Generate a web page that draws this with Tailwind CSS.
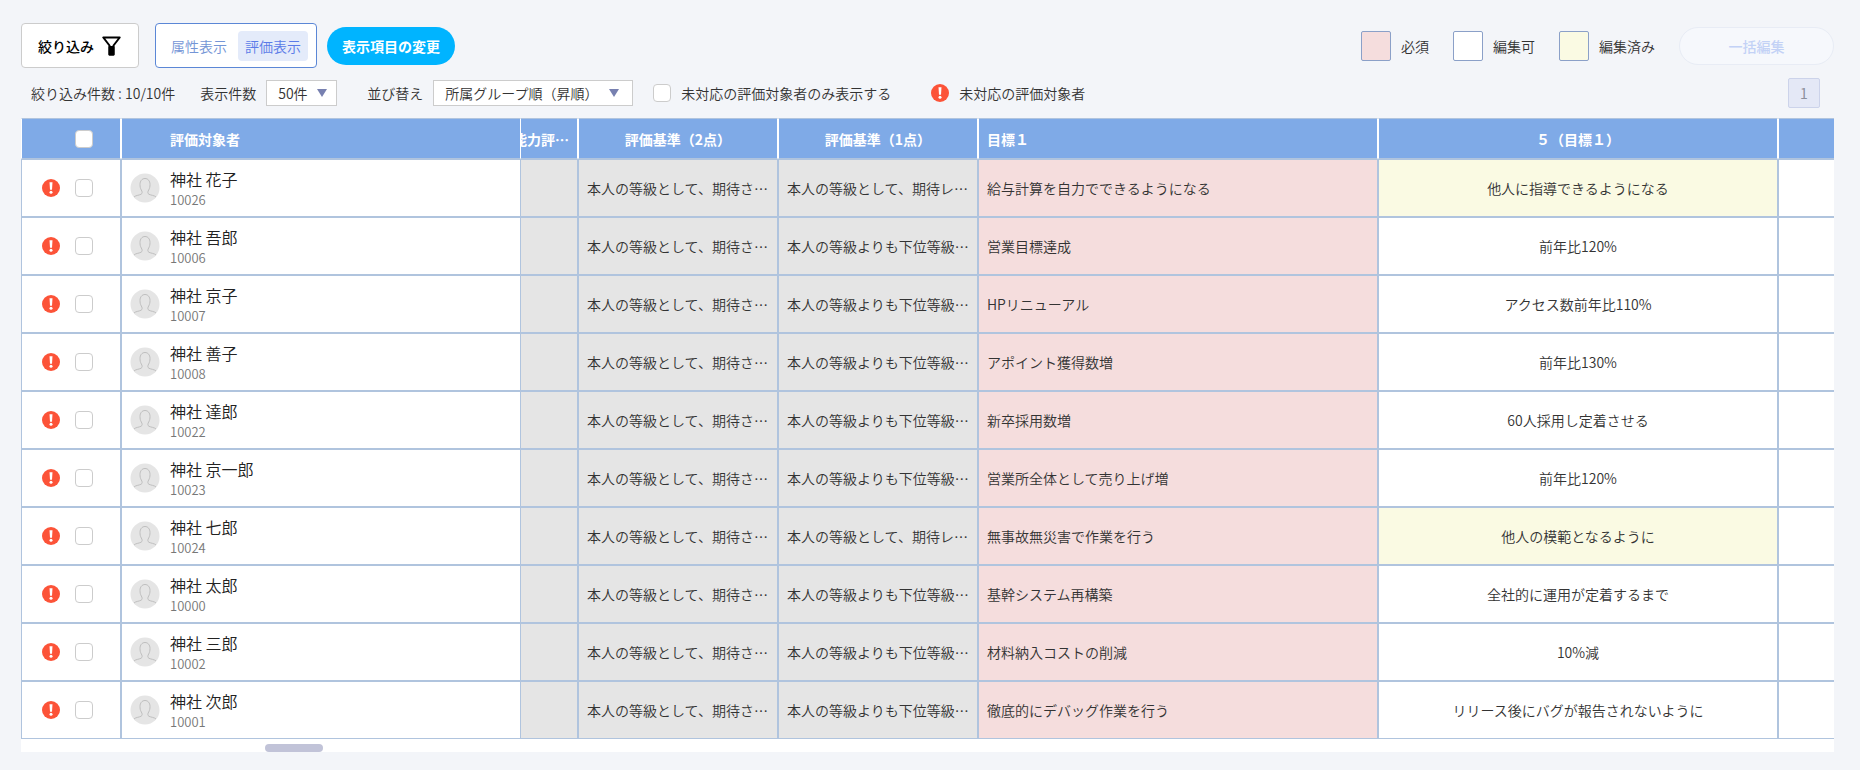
<!DOCTYPE html>
<html lang="ja">
  <head>
    <meta charset="UTF-8" />
    <meta name="viewport" content="width=device-width, initial-scale=1.0" />
    <script src="https://cdn.jsdelivr.net/npm/@tailwindcss/browser@4"></script>
    <title>評価対象者一覧</title>
  </head>
  <body class="min-h-screen bg-[#f3f5f9] font-['Noto_Sans_CJK_JP',sans-serif] text-sm font-[350] text-[#333]">
    <svg class="hidden" aria-hidden="true">
      <symbol id="alert" viewBox="0 0 18 18">
        <circle cx="9" cy="9" r="9" fill="#fc5338" />
        <path d="M7.500 3.300h3l-.5 7.400H8z" fill="#fff" />
        <circle cx="9" cy="13.300" r="1.500" fill="#fff" />
      </symbol>
      <symbol id="avatar" viewBox="0 0 30 30">
        <circle cx="15" cy="15" r="14.500" fill="#e5e5e5" />
        <path d="M4 24c1.500-1.600 5-1.700 7-2.700 1.800-.9 1.200-2.800.3-4.300-1-1.700-1.300-3.500-1.300-5.500C10 8 12 5.500 15 5.500s5 2.500 5 6c0 2-.3 3.800-1.300 5.500-.9 1.500-1.500 3.400.3 4.300 2 1 5.500 1.100 7 2.700" fill="none" stroke="#bfbfbf" />
      </symbol>
    </svg>

    <div class="px-[21px] pt-[23px] pr-[26px]">
      <!-- 上段 -->
      <div class="flex items-center">
        <button class="flex h-[45px] items-center gap-2 rounded border border-[#ccc] bg-white px-4 font-medium text-black">
          絞り込み
          <svg class="size-5" viewBox="0 0 20 20" fill="none" stroke="#000" stroke-width="2"><path d="M1.300 1.500h16.400L11.500 9.500V18.500H7.500V9.500z" stroke-linejoin="round" /><path d="M7.500 11h4v7.500h-4z" fill="#000" stroke-linejoin="round" /></svg>
        </button>
        <div class="ml-4 flex h-[45px] items-center gap-1 rounded border border-[#5b87d6] bg-white px-2">
          <button class="h-[30px] rounded px-[7px] text-[#7495d6]">属性表示</button>
          <button class="h-[30px] rounded bg-[#e4ebfa] px-[7px] text-[#5b7be8]">評価表示</button>
        </div>
        <button class="ml-[10px] h-[38px] rounded-full bg-[#00b4ff] px-[15px] font-bold text-white">表示項目の変更</button>

        <div class="ml-auto flex items-center gap-6">
          <div class="flex items-center gap-[10px]"><span class="size-[30px] rounded-xs border border-[#8ba0c8] bg-[#f5dddd]"></span>必須</div>
          <div class="flex items-center gap-[10px]"><span class="size-[30px] rounded-xs border border-[#8ba0c8] bg-white"></span>編集可</div>
          <div class="flex items-center gap-[10px]"><span class="size-[30px] rounded-xs border border-[#8ba0c8] bg-[#fafae3]"></span>編集済み</div>
          <button class="h-[38px] w-[155px] rounded-full border border-[#e8ecf5] bg-[#f6f8fc] font-medium text-[#c3d2f6]" disabled>一括編集</button>
        </div>
      </div>

      <!-- 下段 -->
      <div class="mt-[10px] flex h-[30px] items-center">
        <span class="ml-[10px]">絞り込み件数 : 10/10件</span>
        <label for="perPage" class="ml-[25px]">表示件数</label>
        <div class="relative ml-[10px]">
          <select id="perPage" class="h-[26px] w-[71px] appearance-none border border-[#ccc] bg-white pl-[11px]">
            <option>50件</option>
            <option>100件</option>
          </select>
          <svg class="pointer-events-none absolute top-2 right-[10px] size-[10px]" viewBox="0 0 10 10" fill="#7780b0"><path d="M0 1h10L5 9z" /></svg>
        </div>
        <label for="sort" class="ml-[30px]">並び替え</label>
        <div class="relative ml-[10px]">
          <select id="sort" class="h-[26px] w-[200px] appearance-none border border-[#ccc] bg-white pl-[11px]">
            <option>所属グループ順（昇順）</option>
            <option>所属グループ順（降順）</option>
          </select>
          <svg class="pointer-events-none absolute top-2 right-[14px] size-[10px]" viewBox="0 0 10 10" fill="#7780b0"><path d="M0 1h10L5 9z" /></svg>
        </div>
        <input id="pending" type="checkbox" class="ml-5 size-[18px] appearance-none rounded border border-[#ccc] bg-white checked:bg-[#7faae7]" />
        <label for="pending" class="ml-[10px]">未対応の評価対象者のみ表示する</label>
        <svg class="ml-10 size-[18px]"><use href="#alert" /></svg>
        <span class="ml-[10px]">未対応の評価対象者</span>
        <button class="mr-[14px] ml-auto h-[30px] w-8 rounded-xs border border-[#ccd3ea] bg-[#e4e8f6] font-normal text-[#8c8f9c]">1</button>
      </div>

      <!-- 一覧 -->
      <div class="mt-[10px] overflow-hidden bg-white">
        <table class="w-full table-fixed border-separate border-spacing-0">
          <colgroup>
            <col class="w-[100px]" />
            <col class="w-[400px]" />
            <col class="w-[57px]" />
            <col class="w-[200px]" />
            <col class="w-[200px]" />
            <col class="w-[400px]" />
            <col class="w-[400px]" />
            <col />
          </colgroup>
          <thead class="bg-[#7faae7] text-white [&_th]:h-[41px] [&_th]:border [&_th]:border-x-white [&_th]:border-y-[#b0c4de] [&_th]:p-0 [&_th]:font-bold">
            <tr>
              <th>
                <div class="flex pl-[53px]"><input type="checkbox" aria-label="すべて選択" class="size-[18px] appearance-none rounded border border-[#ccc] bg-white" /></div>
              </th>
              <th class="text-left"><div class="pl-12">評価対象者</div></th>
              <th class="border-l-0!"><div class="flex justify-end overflow-hidden pr-2 whitespace-nowrap">能力評…</div></th>
              <th>評価基準（2点）</th>
              <th>評価基準（1点）</th>
              <th class="text-left"><div class="pl-2">目標１</div></th>
              <th>５（目標１）</th>
              <th class="border-r-0!"></th>
            </tr>
          </thead>
          <tbody id="rows" class="[&_td]:h-[58px] [&_td]:border [&_td]:border-[#b0c4de] [&_td]:p-0"></tbody>
        </table>
        <div class="h-[13px] pt-[5px] pl-[244px]"><div class="h-2 w-[58px] rounded-full bg-[#c1c3d8]"></div></div>
      </div>
    </div>

    <script>
      const kitai = "本人の等級として、期待さ…";
      const reberu = "本人の等級として、期待レ…";
      const kai = "本人の等級よりも下位等級…";

      const members = [
        { id: "10026", name: "神社 花子", one: reberu, goal: "給与計算を自力でできるようになる", level: "他人に指導できるようになる", edited: true },
        { id: "10006", name: "神社 吾郎", one: kai, goal: "営業目標達成", level: "前年比120%" },
        { id: "10007", name: "神社 京子", one: kai, goal: "HPリニューアル", level: "アクセス数前年比110%" },
        { id: "10008", name: "神社 善子", one: kai, goal: "アポイント獲得数増", level: "前年比130%" },
        { id: "10022", name: "神社 達郎", one: kai, goal: "新卒採用数増", level: "60人採用し定着させる" },
        { id: "10023", name: "神社 京一郎", one: kai, goal: "営業所全体として売り上げ増", level: "前年比120%" },
        { id: "10024", name: "神社 七郎", one: reberu, goal: "無事故無災害で作業を行う", level: "他人の模範となるように", edited: true },
        { id: "10000", name: "神社 太郎", one: kai, goal: "基幹システム再構築", level: "全社的に運用が定着するまで" },
        { id: "10002", name: "神社 三郎", one: kai, goal: "材料納入コストの削減", level: "10%減" },
        { id: "10001", name: "神社 次郎", one: kai, goal: "徹底的にデバッグ作業を行う", level: "リリース後にバグが報告されないように" },
      ];

      document.getElementById("rows").innerHTML = members.map((m) => `
        <tr>
          <td>
            <div class="flex items-center gap-[15px] pl-5">
              <svg class="size-[18px]"><use href="#alert" /></svg>
              <input type="checkbox" aria-label="${m.name}" class="size-[18px] appearance-none rounded border border-[#ccc] bg-white checked:bg-[#7faae7]" />
            </div>
          </td>
          <td>
            <div class="flex items-center gap-[10px] pl-2">
              <svg class="size-[30px]"><use href="#avatar" /></svg>
              <div class="pt-1">
                <div class="text-base leading-5 text-[#222]">${m.name}</div>
                <div class="text-[13px] leading-[22px] text-[#777]">${m.id}</div>
              </div>
            </div>
          </td>
          <td class="border-l-0! bg-[#e5e5e5]"></td>
          <td class="bg-[#e5e5e5]"><div class="truncate px-2">${kitai}</div></td>
          <td class="bg-[#e5e5e5]"><div class="truncate px-2">${m.one}</div></td>
          <td class="bg-[#f5dddd]"><div class="truncate px-2">${m.goal}</div></td>
          <td class="${m.edited ? "bg-[#fafae3]" : "bg-white"} text-center">${m.level}</td>
          <td class="border-r-0!"></td>
        </tr>`).join("");
    </script>
  </body>
</html>
